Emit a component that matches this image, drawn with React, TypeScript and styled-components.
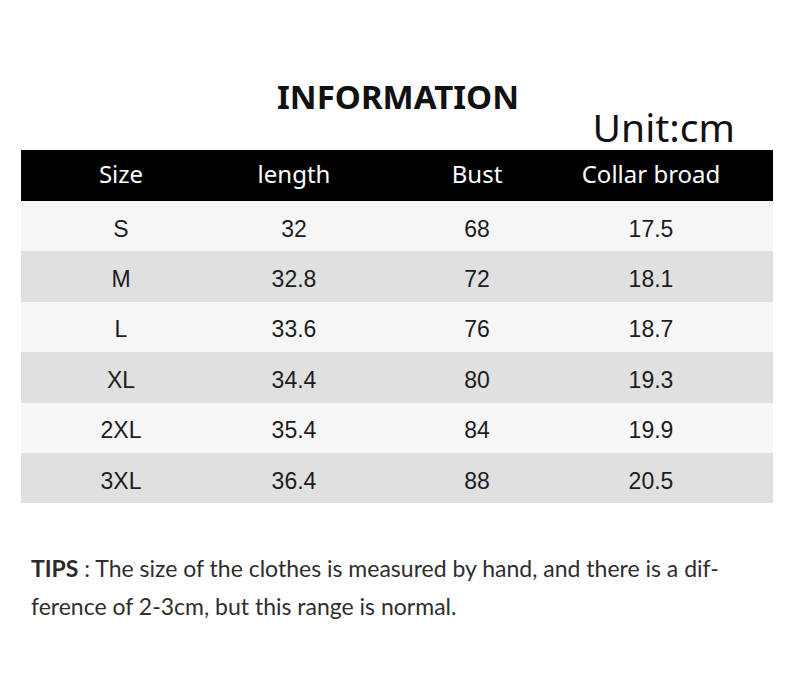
import React from "react";
import styled, { createGlobalStyle } from "styled-components";

const GlobalStyle = createGlobalStyle`
  body {
    margin: 0;
    background: #ffffff;
  }
`;

const Page = styled.div`
  width: 752px;
  margin-left: 21px;
  padding-top: 82px;
`;

const Title = styled.h1`
  margin: 0;
  font-family: "Noto Sans", "DejaVu Sans", sans-serif;
  font-weight: 700;
  font-size: 33px;
  line-height: 30px;
  text-align: center;
  color: #111;
  padding-left: 2px;
`;

const Unit = styled.div`
  font-family: "Noto Sans", "DejaVu Sans", sans-serif;
  font-size: 39px;
  line-height: 30px;
  text-align: right;
  padding-right: 38px;
  margin-bottom: 8px;
  color: #111;
`;

const Row = styled.div<{ $shade: "head" | "light" | "dark" }>`
  display: grid;
  grid-template-columns: 200px 146px 220px 128px;
  align-items: center;
  height: ${(p) => (p.$shade === "head" ? "51px" : "50.4px")};
  background: ${(p) =>
    p.$shade === "head" ? "#000" : p.$shade === "light" ? "#f6f6f6" : "#e0e0e0"};
`;

const HeadCell = styled.div`
  justify-self: center;
  white-space: nowrap;
  font-family: "Noto Sans", "Open Sans", sans-serif;
  font-size: 24px;
  line-height: 30px;
  padding-bottom: 4px;
  color: #fff;
`;

const Cell = styled.div`
  justify-self: center;
  white-space: nowrap;
  font-family: "Liberation Sans", Arial, sans-serif;
  font-size: 23px;
  line-height: 30px;
  padding-top: 5px;
  color: #1c1c1c;
`;

const Tips = styled.p`
  margin: 46px 0 0;
  padding-left: 10px;
  font-family: Lato, "Noto Sans", sans-serif;
  font-size: 23px;
  line-height: 38px;
  color: #2e2e2e;
`;

const Label = styled.b`
  font-weight: 700;
  color: #2a2a2a;
`;

const headers = ["Size", "length", "Bust", "Collar broad"];

const rows = [
  ["S", "32", "68", "17.5"],
  ["M", "32.8", "72", "18.1"],
  ["L", "33.6", "76", "18.7"],
  ["XL", "34.4", "80", "19.3"],
  ["2XL", "35.4", "84", "19.9"],
  ["3XL", "36.4", "88", "20.5"],
];

const App = () => {
  return (
    <Page>
      <GlobalStyle />
      <Title>INFORMATION</Title>
      <Unit>Unit:cm</Unit>
      <Row $shade="head">
        {headers.map((h) => (
          <HeadCell key={h}>{h}</HeadCell>
        ))}
      </Row>
      {rows.map((r, i) => (
        <Row key={r[0]} $shade={i % 2 === 0 ? "light" : "dark"}>
          {r.map((v, j) => (
            <Cell key={j}>{v}</Cell>
          ))}
        </Row>
      ))}
      <Tips>
        <Label>TIPS</Label> : The size of the clothes is measured by hand, and there is a dif-
        <br />
        ference of 2-3cm, but this range is normal.
      </Tips>
    </Page>
  );
};

export default App;
